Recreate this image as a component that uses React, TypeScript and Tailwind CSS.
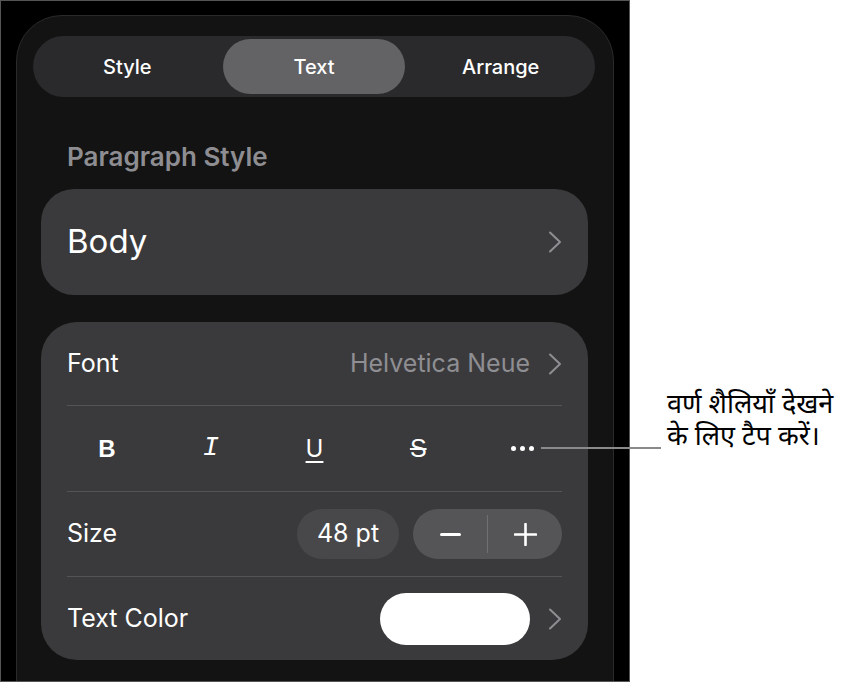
import React from "react";

const Chevron = () => (
    <svg width="14" height="22" viewBox="0 0 14 22" fill="none">
        <path d="M2 1.5L12 11L2 20.5" stroke="#8e8e93" strokeWidth="2" strokeLinecap="round" strokeLinejoin="round" />
    </svg>
);

export default function App() {
    return (
        <div className="relative flex w-[849px] h-[684px] bg-white font-['Inter',sans-serif] overflow-hidden">
            {/* device frame */}
            <div className="w-[630px] h-[682px] shrink-0 bg-black border border-[#555] overflow-hidden">
                <div className="mx-[15px] mt-[14px] h-[700px] rounded-t-[46px] bg-[#131313] border border-[#2a2a2a] pt-[20px] pl-[16px]">
                    {/* tabs */}
                    <div className="w-[562px] h-[61px] rounded-full bg-[#2a2a2d] p-[3px] grid grid-cols-3 gap-[4px] text-[20px] font-medium text-white">
                        <div className="flex items-center justify-center">Style</div>
                        <div className="flex items-center justify-center rounded-full bg-[#636366]">Text</div>
                        <div className="flex items-center justify-center">Arrange</div>
                    </div>

                    <div className="mt-[45px] ml-[34px] h-[30px] leading-[30px] text-[26px] font-semibold text-[#8d8d92]">
                        Paragraph Style
                    </div>

                    {/* paragraph style card */}
                    <div className="mt-[17px] ml-[8px] w-[547px] h-[106px] rounded-[33px] bg-[#3a3a3c] flex items-center justify-between pl-[26px] pr-[26px]">
                        <span className="text-[33px] text-white">Body</span>
                        <Chevron />
                    </div>

                    {/* font card */}
                    <div className="mt-[27px] ml-[8px] w-[547px] h-[338px] rounded-[36px] bg-[#3a3a3c] px-[26px] text-[25px] text-white">
                        <div className="h-[84px] border-b border-[#545456] flex items-center justify-between">
                            <span>Font</span>
                            <div className="flex items-center gap-[18px]">
                                <span className="text-[#8e8e93]">Helvetica Neue</span>
                                <Chevron />
                            </div>
                        </div>

                        <div className="h-[86px] border-b border-[#545456] flex items-center justify-between px-[25px]">
                            <div className="w-[30px] flex justify-center text-[24px] font-bold font-['Liberation_Sans',sans-serif]">B</div>
                            <div className="w-[30px] flex justify-center text-[27px] italic font-['Liberation_Mono',monospace]">I</div>
                            <div className="w-[30px] flex justify-center text-[24px] underline underline-offset-[4px] decoration-[2px]">U</div>
                            <div className="w-[30px] flex justify-center text-[25px] line-through decoration-[2px] font-['Liberation_Sans',sans-serif]">S</div>
                            <div className="w-[30px] flex justify-center items-center gap-[4px]">
                                <span className="w-[5px] h-[5px] rounded-full bg-white" />
                                <span className="w-[5px] h-[5px] rounded-full bg-white" />
                                <span className="w-[5px] h-[5px] rounded-full bg-white" />
                            </div>
                        </div>

                        <div className="h-[85px] border-b border-[#545456] flex items-center justify-between">
                            <span>Size</span>
                            <div className="flex items-center gap-[14px]">
                                <div className="w-[102px] h-[50px] rounded-full bg-[#48484a] flex items-center justify-center">48 pt</div>
                                <div className="w-[149px] h-[50px] rounded-full bg-[#555557] flex items-center">
                                    <div className="flex-1 flex items-center justify-center">
                                        <span className="w-[21px] h-[3px] bg-white rounded-full" />
                                    </div>
                                    <div className="w-px h-[38px] bg-[#707072]" />
                                    <div className="flex-1 flex items-center justify-center">
                                        <svg width="23" height="23" viewBox="0 0 23 23">
                                            <path d="M11.5 1v21M1 11.5h21" stroke="white" strokeWidth="2.6" strokeLinecap="round" />
                                        </svg>
                                    </div>
                                </div>
                            </div>
                        </div>

                        <div className="h-[84px] flex items-center justify-between">
                            <span>Text Color</span>
                            <div className="flex items-center gap-[18px]">
                                <div className="w-[150px] h-[52px] rounded-full bg-white" />
                                <Chevron />
                            </div>
                        </div>
                    </div>
                </div>
            </div>

            {/* callout */}
            <div className="ml-[37px] mt-[391px] text-[27px] leading-[32px] text-black font-['Noto_Sans_Devanagari','Lohit_Devanagari','Noto_Sans',sans-serif]">
                <div>वर्ण शैलियाँ देखने</div>
                <div>के लिए टैप करें।</div>
            </div>
            <div className="absolute left-[541px] top-[447px] w-[120px] h-[2px] bg-[#8a8a8a]" />
        </div>
    );
}
